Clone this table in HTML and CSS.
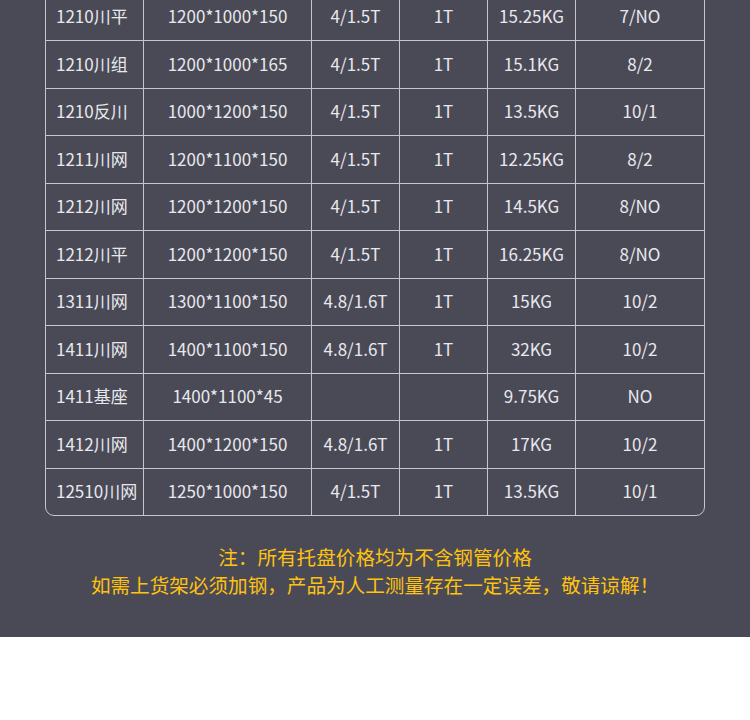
FILE: index.html
```html
<!DOCTYPE html>
<html lang="zh-CN">
<head>
<meta charset="utf-8">
<link rel="stylesheet" href="styles.css">
</head>
<body>
<div class="page">
  <div class="table">
    <div class="row"><div class="c c1">1210川平</div><div class="c">1200*1000*150</div><div class="c">4/1.5T</div><div class="c">1T</div><div class="c">15.25KG</div><div class="c">7/NO</div></div>
    <div class="row"><div class="c c1">1210川组</div><div class="c">1200*1000*165</div><div class="c">4/1.5T</div><div class="c">1T</div><div class="c">15.1KG</div><div class="c">8/2</div></div>
    <div class="row"><div class="c c1">1210反川</div><div class="c">1000*1200*150</div><div class="c">4/1.5T</div><div class="c">1T</div><div class="c">13.5KG</div><div class="c">10/1</div></div>
    <div class="row"><div class="c c1">1211川网</div><div class="c">1200*1100*150</div><div class="c">4/1.5T</div><div class="c">1T</div><div class="c">12.25KG</div><div class="c">8/2</div></div>
    <div class="row"><div class="c c1">1212川网</div><div class="c">1200*1200*150</div><div class="c">4/1.5T</div><div class="c">1T</div><div class="c">14.5KG</div><div class="c">8/NO</div></div>
    <div class="row"><div class="c c1">1212川平</div><div class="c">1200*1200*150</div><div class="c">4/1.5T</div><div class="c">1T</div><div class="c">16.25KG</div><div class="c">8/NO</div></div>
    <div class="row"><div class="c c1">1311川网</div><div class="c">1300*1100*150</div><div class="c">4.8/1.6T</div><div class="c">1T</div><div class="c">15KG</div><div class="c">10/2</div></div>
    <div class="row"><div class="c c1">1411川网</div><div class="c">1400*1100*150</div><div class="c">4.8/1.6T</div><div class="c">1T</div><div class="c">32KG</div><div class="c">10/2</div></div>
    <div class="row"><div class="c c1">1411基座</div><div class="c">1400*1100*45</div><div class="c"></div><div class="c"></div><div class="c">9.75KG</div><div class="c">NO</div></div>
    <div class="row"><div class="c c1">1412川网</div><div class="c">1400*1200*150</div><div class="c">4.8/1.6T</div><div class="c">1T</div><div class="c">17KG</div><div class="c">10/2</div></div>
    <div class="row"><div class="c c1">12510川网</div><div class="c">1250*1000*150</div><div class="c">4/1.5T</div><div class="c">1T</div><div class="c">13.5KG</div><div class="c">10/1</div></div>
  </div>
  <div class="note">
    <p>注：所有托盘价格均为不含钢管价格</p>
    <p>如需上货架必须加钢，产品为人工测量存在一定误差，敬请谅解！</p>
  </div>
</div>
</body>
</html>
```
FILE: styles.css
```css
html, body {
  margin: 0;
  padding: 0;
  background: #ffffff;
}
.page {
  background: #4a4a57;
  height: 637px;
  overflow: hidden;
  font-family: "Noto Sans CJK SC", "Noto Sans", sans-serif;
}
.table {
  margin: -7px 45px 0 45px;
  border: 1px solid #c6c6cc;
  border-radius: 0 0 9px 9px;
  overflow: hidden;
}
.row {
  display: grid;
  grid-template-columns: 98px 168px 88px 88px 88px 128px;
  height: 47px;
  border-bottom: 1px solid #c6c6cc;
  box-sizing: border-box;
}
.row:nth-child(even) {
  height: 48px;
}
.row:last-child {
  border-bottom: none;
  height: 46px;
}
.c {
  display: flex;
  align-items: center;
  justify-content: center;
  border-right: 1px solid #c6c6cc;
  color: #e8e8ec;
  font-size: 17px;
  padding-bottom: 3px;
  white-space: nowrap;
}
.c:last-child {
  border-right: none;
}
.c1 {
  justify-content: flex-start;
  padding-left: 10px;
}
.note {
  margin-top: 27px;
  text-align: center;
  color: #ffc20e;
  font-size: 19.6px;
  line-height: 27.5px;
}
.note p {
  margin: 0;
}
```
